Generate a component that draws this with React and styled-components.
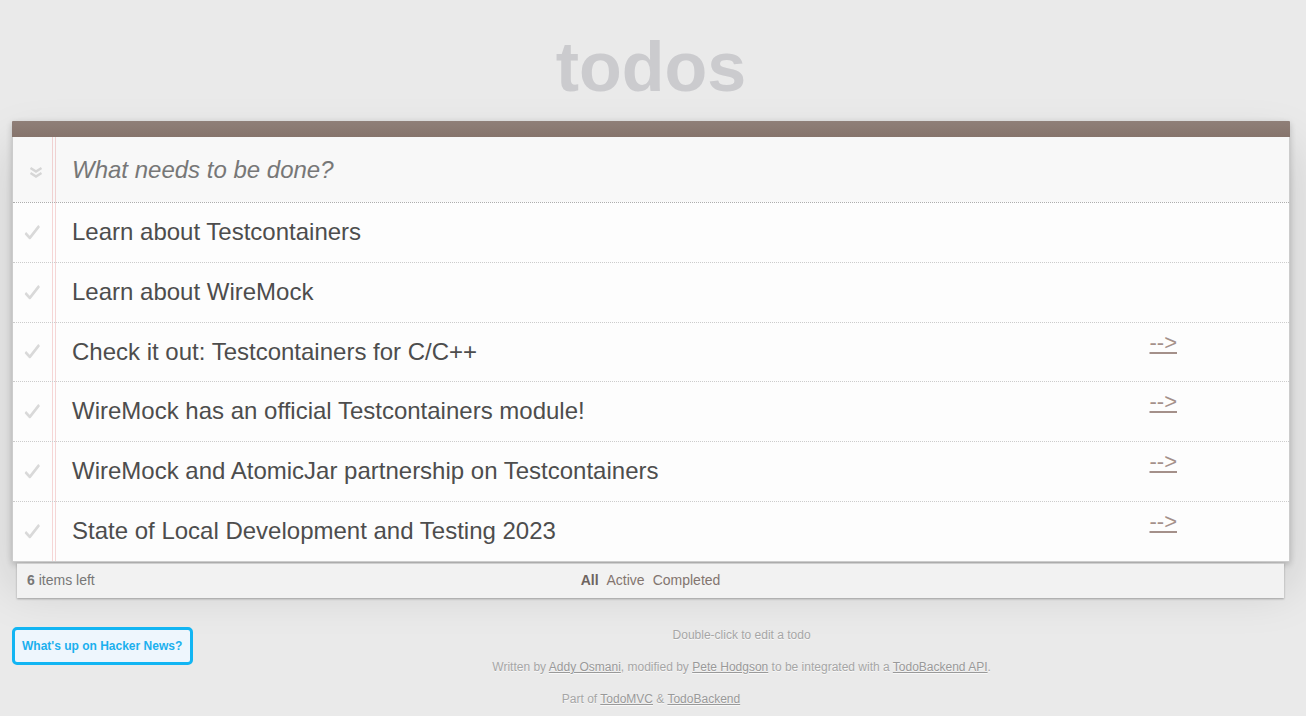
import React from "react";
import styled, { createGlobalStyle } from "styled-components";

const GlobalStyle = createGlobalStyle`
  html, body {
    margin: 0;
    padding: 0;
  }
  body {
    background: #eaeaea;
    font: 14px "Liberation Sans", Arial, sans-serif;
    line-height: 1.4em;
    color: #4d4d4d;
  }
  * {
    box-sizing: border-box;
  }
`;

const Page = styled.div`
  padding: 32px 16px 20px 12px;
`;

const Title = styled.h1`
  margin: 0 0 19px;
  font-size: 70px;
  line-height: 70px;
  font-weight: bold;
  text-align: center;
  color: #cbcbce;
`;

const TodoApp = styled.section`
  background: rgba(255, 255, 255, 0.9);
  border: 1px solid #ccc;
  border-top: none;
  border-radius: 2px 2px 0 0;
  box-shadow: 0 2px 6px 0 rgba(0, 0, 0, 0.2), 0 25px 50px 0 rgba(0, 0, 0, 0.15);
`;

const HeaderBar = styled.div`
  height: 16px;
  margin: 0 -1px;
  background: linear-gradient(#8f7f78, #86746c);
  border-radius: 1px 1px 0 0;
`;

const Body = styled.div`
  background: linear-gradient(
    to right,
    transparent 39px,
    #f5d6d6 39px,
    #f5d6d6 40px,
    transparent 40px,
    transparent 42px,
    #f5d6d6 42px,
    #f5d6d6 43px,
    transparent 43px
  );
`;

const NewRow = styled.div`
  display: flex;
  align-items: center;
  height: 65px;
  background: rgba(0, 0, 0, 0.02);
`;

const ToggleAll = styled.span`
  width: 40px;
  display: flex;
  justify-content: center;
  padding: 5px 0 0 5px;

  svg {
    display: block;
  }
`;

const NewInput = styled.input`
  flex: 1;
  border: none;
  outline: none;
  background: transparent;
  font: 24px "Liberation Sans", Arial, sans-serif;
  line-height: 1.4em;
  color: #4d4d4d;
  padding: 16px 16px 16px 19px;

  &::placeholder {
    font-style: italic;
    color: #777;
  }
`;

const List = styled.ul`
  margin: 0;
  padding: 0;
  list-style: none;
  border-top: 1px dotted #adadad;
`;

const Row = styled.li`
  display: flex;
  align-items: stretch;
  font-size: 24px;
  border-bottom: 1px dotted #ccc;

  &:last-child {
    border-bottom: none;
  }
`;

const Check = styled.span`
  width: 40px;
  display: flex;
  align-items: center;
  justify-content: center;
  padding-right: 2px;

  svg {
    display: block;
  }
`;

const Label = styled.label`
  flex: 1;
  margin-left: 5px;
  padding: 15px 15px 15px 14px;
  line-height: 1.2;
  white-space: pre;
`;

const More = styled.a`
  align-self: flex-start;
  margin: 9px 112px 0 0;
  font-size: 22px;
  line-height: 22px;
  color: #a4908a;
  text-decoration: underline;
`;

const Footer = styled.footer`
  display: grid;
  grid-template-columns: 1fr auto 1fr;
  align-items: center;
  height: 35px;
  margin: 1px 6px 0 5px;
  padding: 0 10px;
  background: #f2f2f2;
  color: #777;
  border-top: 1px solid #cfcfcf;
  box-shadow: 0 1px 2px rgba(0, 0, 0, 0.3);
`;

const Count = styled.span`
  b {
    font-weight: bold;
  }
`;

const Filters = styled.ul`
  display: flex;
  gap: 8px;
  margin: 0;
  padding: 0;
  list-style: none;
`;

const Filter = styled.a`
  color: ${(p) => (p.$selected ? "#6e6460" : "#83756f")};
  font-weight: ${(p) => (p.$selected ? "bold" : "normal")};
  text-decoration: none;
`;

const Bottom = styled.div`
  margin-top: 30px;
  color: #a6a6a6;
  font-size: 12px;
  text-align: center;
  text-shadow: 0 1px 0 rgba(255, 255, 255, 0.7);

  p {
    margin: 0 0 18px;
    line-height: 14px;
  }
  a {
    color: #999;
    text-decoration: underline;
  }
`;

const HackerButton = styled.a`
  float: left;
  padding: 9px 8px 9px 7px;
  margin-top: -1px;
  border: 3px solid #12b5f3;
  border-radius: 5px;
  background: #eef6fd;
  font-size: 12px;
  font-weight: bold;
  line-height: 14px;
  text-shadow: none;

  && {
    color: #1bb0ee;
    text-decoration: none;
  }
`;

const CheckIcon = () => (
  <svg width="16" height="15" viewBox="0 0 16 15">
    <polyline
      points="1.5,8.5 5.8,13.2 15,1.5"
      fill="none"
      stroke="#c4c4c4"
      strokeWidth="2"
      strokeLinejoin="round"
      transform="translate(0,-0.8)"
      opacity="0.6"
    />
    <polyline
      points="1.5,8.5 5.8,13.2 15,1.5"
      fill="none"
      stroke="#d9d9d9"
      strokeWidth="2.2"
      strokeLinejoin="round"
    />
  </svg>
);

const ChevronIcon = () => (
  <svg width="14" height="11" viewBox="0 0 14 11">
    <polyline points="1.5,1 7,4.5 12.5,1" fill="none" stroke="#d6d6d6" strokeWidth="2.4" />
    <polyline points="1.5,6 7,9.5 12.5,6" fill="none" stroke="#d6d6d6" strokeWidth="2.4" />
  </svg>
);

const todos = [
  { text: "Learn about Testcontainers" },
  { text: "Learn about WireMock" },
  { text: "Check it out: Testcontainers for C/C++", link: true },
  { text: "WireMock has an official Testcontainers module!", link: true },
  { text: "WireMock and AtomicJar partnership on Testcontainers", link: true },
  { text: "State of Local Development and Testing 2023", link: true },
];

const App = () => {
  return (
    <Page>
      <GlobalStyle />
      <Title>todos</Title>
      <TodoApp>
        <HeaderBar />
        <Body>
          <NewRow>
            <ToggleAll>
              <ChevronIcon />
            </ToggleAll>
            <NewInput placeholder="What needs to be done?" />
          </NewRow>
          <List>
            {todos.map((t) => (
              <Row key={t.text}>
                <Check>
                  <CheckIcon />
                </Check>
                <Label>{t.text}</Label>
                {t.link && <More href="#">--&gt;</More>}
              </Row>
            ))}
          </List>
        </Body>
      </TodoApp>
      <Footer>
        <Count>
          <b>6</b> items left
        </Count>
        <Filters>
          <li>
            <Filter href="#" $selected>
              All
            </Filter>
          </li>
          <li>
            <Filter href="#">Active</Filter>
          </li>
          <li>
            <Filter href="#">Completed</Filter>
          </li>
        </Filters>
        <span />
      </Footer>
      <Bottom>
        <HackerButton href="#">What's up on Hacker News?</HackerButton>
        <p>Double-click to edit a todo</p>
        <p>
          Written by <a href="#">Addy Osmani</a>, modified by{" "}
          <a href="#">Pete Hodgson</a> to be integrated with a{" "}
          <a href="#">TodoBackend API</a>.
        </p>
        <p>
          Part of <a href="#">TodoMVC</a> &amp; <a href="#">TodoBackend</a>
        </p>
      </Bottom>
    </Page>
  );
};

export default App;
